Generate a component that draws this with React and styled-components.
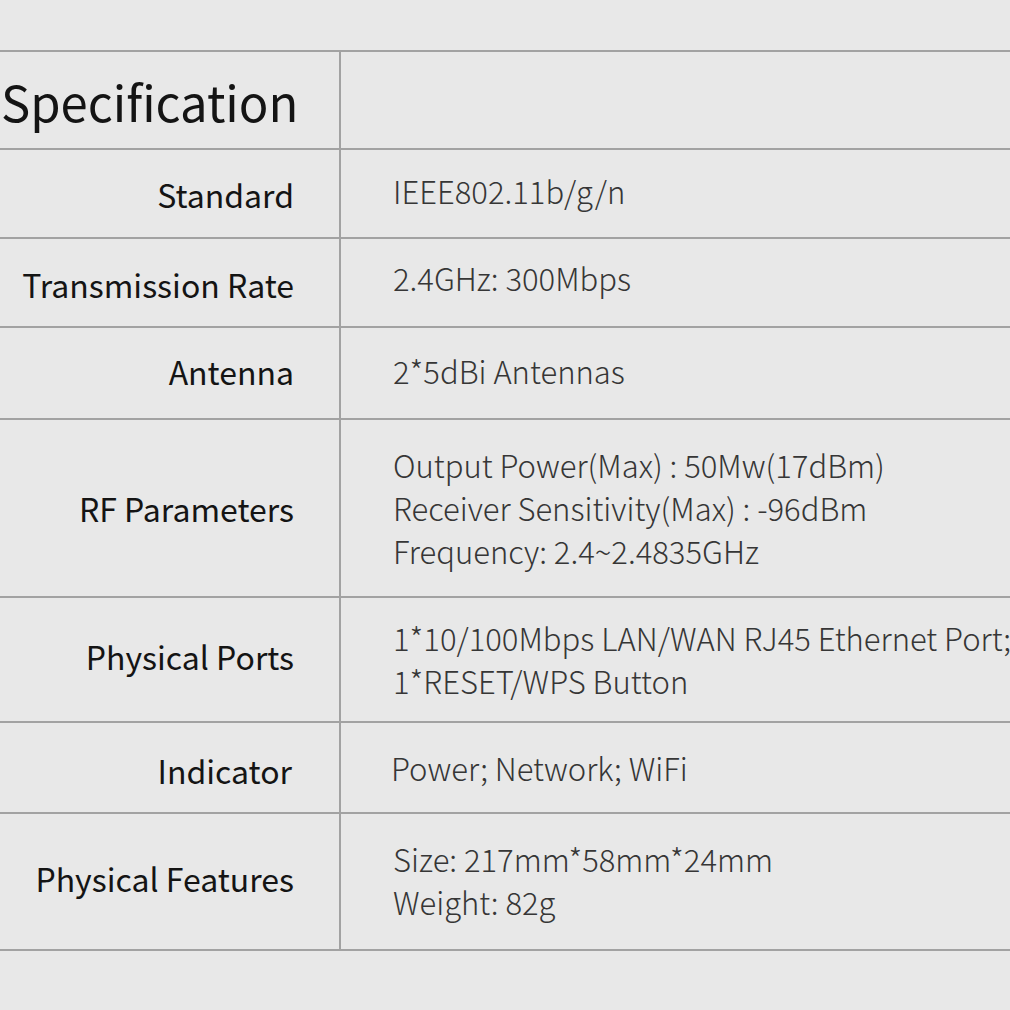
import React from "react";
import styled, { createGlobalStyle } from "styled-components";

const Global = createGlobalStyle`
  html, body { margin: 0; padding: 0; background: #e8e8e8; overflow: hidden; }
  body { width: 1010px; height: 1010px; }
`;

const Page = styled.div`
  padding-top: 50px;
  width: 1010px;
  height: 1010px;
  box-sizing: border-box;
  background: #e8e8e8;
  font-family: "Noto Sans CJK SC", "Noto Sans", sans-serif;
  overflow: hidden;
`;

const Table = styled.div`
  display: grid;
  grid-template-columns: 341px 1fr;
  border-top: 2px solid #a2a2a2;
`;

const shiftPad = (off = 0) =>
  off >= 0 ? `${off * 2}px` : "0px";
const shiftPadBottom = (off = 0) =>
  off < 0 ? `${-off * 2}px` : "0px";

const Label = styled.div`
  height: ${(p) => p.$h}px;
  box-sizing: border-box;
  border-right: 2px solid #a2a2a2;
  border-bottom: 2px solid #a2a2a2;
  display: flex;
  align-items: center;
  justify-content: ${(p) => (p.$title ? "flex-start" : "flex-end")};
  padding-left: ${(p) => (p.$title ? "1px" : "0")};
  padding-right: ${(p) => (p.$title ? "0" : `${p.$right || 45}px`)};
  padding-top: ${(p) => shiftPad(p.$off)};
  padding-bottom: ${(p) => shiftPadBottom(p.$off)};
  color: #141414;
  font-size: ${(p) => (p.$title ? "49px" : "32px")};
  white-space: nowrap;
`;

const Value = styled.div`
  height: ${(p) => p.$h}px;
  box-sizing: border-box;
  border-bottom: 2px solid #a2a2a2;
  display: flex;
  flex-direction: column;
  justify-content: center;
  padding-left: ${(p) => p.$left || 52}px;
  padding-top: ${(p) => shiftPad(p.$off)};
  padding-bottom: ${(p) => shiftPadBottom(p.$off)};
  color: #363636;
  font-size: 31px;
  font-weight: 300;
  line-height: 43px;
  white-space: nowrap;
`;

const rows = [
  { label: "Standard", h: 89, lo: 0, vo: -3.5, values: ["IEEE802.11b/g/n"] },
  { label: "Transmission Rate", h: 89, lo: 1, vo: -5, values: ["2.4GHz: 300Mbps"] },
  { label: "Antenna", h: 92, lo: -2.5, vo: -3, values: ["2*5dBi Antennas"] },
  {
    label: "RF Parameters",
    h: 178,
    lo: 0,
    vo: -1,
    values: [
      "Output Power(Max) : 50Mw(17dBm)",
      "Receiver Sensitivity(Max) : -96dBm",
      "Frequency: 2.4~2.4835GHz",
    ],
  },
  {
    label: "Physical Ports",
    h: 125,
    lo: -3.5,
    vo: -1,
    values: ["1*10/100Mbps LAN/WAN RJ45 Ethernet Port;", "1*RESET/WPS Button"],
  },
  { label: "Indicator", h: 91, lo: 2.5, vo: 0, right: 47, left: 50, values: ["Power; Network; WiFi"] },
  {
    label: "Physical Features",
    h: 137,
    lo: -3.5,
    vo: -2,
    values: ["Size: 217mm*58mm*24mm", "Weight: 82g"],
  },
];

export default function App() {
  return (
    <Page>
      <Global />
      <Table>
        <Label $title $h={98}>Specification</Label>
        <Value $h={98} />
        {rows.map((r) => (
          <React.Fragment key={r.label}>
            <Label $h={r.h} $off={r.lo} $right={r.right}>{r.label}</Label>
            <Value $h={r.h} $off={r.vo} $left={r.left}>
              {r.values.map((v) => (
                <div key={v}>{v}</div>
              ))}
            </Value>
          </React.Fragment>
        ))}
      </Table>
    </Page>
  );
}
